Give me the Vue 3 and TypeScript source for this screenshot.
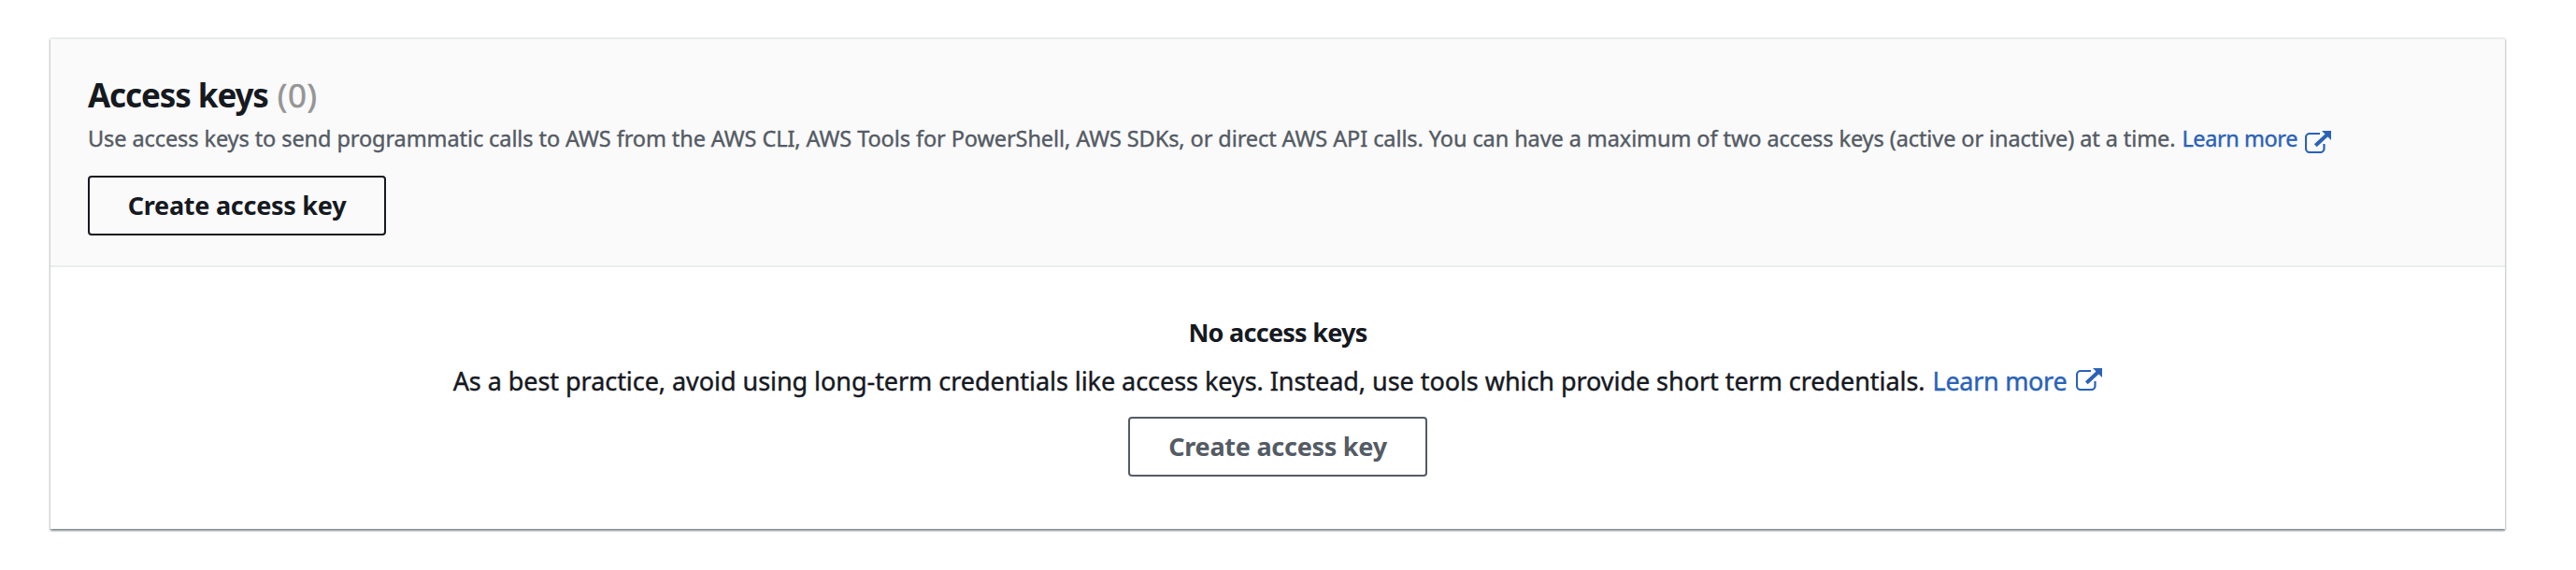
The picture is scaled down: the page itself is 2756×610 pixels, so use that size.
<script setup lang="ts">
import { ref } from 'vue'

const keyCount = ref(0)
const iconBox = 'M16 3H5a4 4 0 0 0-4 4v12a4 4 0 0 0 4 4h11.5a4 4 0 0 0 4-4v-5'
const iconShaft = 'M11.3 15.7 24 4'
const iconHead = 'M18 0H28v10z'
</script>

<template>
  <main class="page">
    <section class="card">
      <header class="head">
        <h2 class="title">
          <span class="name">Access keys</span>
          <span class="count">({{ keyCount }})</span>
        </h2>
        <p class="line desc">
          <span class="copy">Use access keys to send programmatic calls to AWS from the AWS CLI, AWS Tools for PowerShell, AWS SDKs, or direct AWS API calls. You can have a maximum of two access keys (active or inactive) at a time.</span>
          <a class="link" href="#"><span>Learn more</span>
            <svg class="icon" viewBox="0 0 28 24" fill="none" stroke="currentColor">
              <path :d="iconBox" stroke-width="2.2" />
              <path :d="iconShaft" stroke-width="4" />
              <path :d="iconHead" fill="currentColor" stroke="none" />
            </svg>
          </a>
        </p>
        <button class="btn" type="button">Create access key</button>
      </header>
      <div class="empty">
        <h3 class="empty-title">No access keys</h3>
        <p class="line advice">
          <span class="copy">As a best practice, avoid using long-term credentials like access keys. Instead, use tools which provide short term credentials.</span>
          <a class="link" href="#"><span>Learn more</span>
            <svg class="icon" viewBox="0 0 28 24" fill="none" stroke="currentColor">
              <path :d="iconBox" stroke-width="2.2" />
              <path :d="iconShaft" stroke-width="4" />
              <path :d="iconHead" fill="currentColor" stroke="none" />
            </svg>
          </a>
        </p>
        <button class="btn muted" type="button">Create access key</button>
      </div>
    </section>
  </main>
</template>

<style>
body {
  background: #fff;
}
</style>

<style scoped>
.page {
  box-sizing: border-box;
  height: 610px;
  padding: 40px 76px 44px 54px;
  background: #fff;
}
.card {
  box-sizing: border-box;
  height: 526px;
  border-top: 2px solid #eaeded;
  background: #fff;
  box-shadow: 0 2px 2px rgba(0, 28, 36, 0.3), 1px 2px 2px rgba(0, 28, 36, 0.15), -1px 2px 2px rgba(0, 28, 36, 0.15);
  font-family: "Noto Sans", "Open Sans", sans-serif;
  color: #16191f;
}
.head {
  padding: 38px 40px 32px;
  border-bottom: 2px solid #eaeded;
  background: #fafafa;
}
.title {
  display: flex;
  gap: 10px;
  margin: 0;
  font-size: 35px;
  line-height: 44px;
}
.name {
  letter-spacing: -1.1px;
}
.count {
  font-weight: 400;
  letter-spacing: 0.6px;
  color: #959595;
  -webkit-text-stroke: 0.5px currentColor;
}
.line {
  display: flex;
  margin: 0;
  white-space: nowrap;
  -webkit-text-stroke: 0.4px currentColor;
}
.desc {
  margin-top: 6px;
  font-size: 23.5px;
  line-height: 36px;
  color: #545b64;
}
.desc .copy {
  letter-spacing: -0.088px;
}
.link {
  display: flex;
  color: #2a62b8;
  text-decoration: none;
}
.desc .link {
  margin-left: 7px;
  letter-spacing: -0.42px;
}
.icon {
  width: 28px;
  height: 24px;
  margin: 10px 0 0 8px;
}
.btn {
  box-sizing: border-box;
  display: block;
  width: 319px;
  height: 64px;
  margin-top: 22px;
  padding: 0;
  border: 2px solid #16191f;
  border-radius: 4px;
  background: transparent;
  color: #16191f;
  font: 700 27px/60px "Noto Sans", "Open Sans", sans-serif;
  letter-spacing: -0.26px;
}
.empty {
  display: flex;
  flex-direction: column;
  align-items: center;
  padding-top: 48px;
}
.empty-title {
  margin: 0;
  font-size: 27px;
  line-height: 44px;
  letter-spacing: -0.73px;
}
.advice {
  margin-top: 8px;
  font-size: 27px;
  line-height: 44px;
}
.advice .copy {
  letter-spacing: -0.05px;
}
.advice .link {
  margin-left: 8px;
  letter-spacing: -0.3px;
}
.advice .icon {
  margin: 8px 0 0 10px;
}
.muted {
  width: 320px;
  margin-top: 16px;
  border-color: #545b64;
  background: #fff;
  color: #545b64;
}
</style>
